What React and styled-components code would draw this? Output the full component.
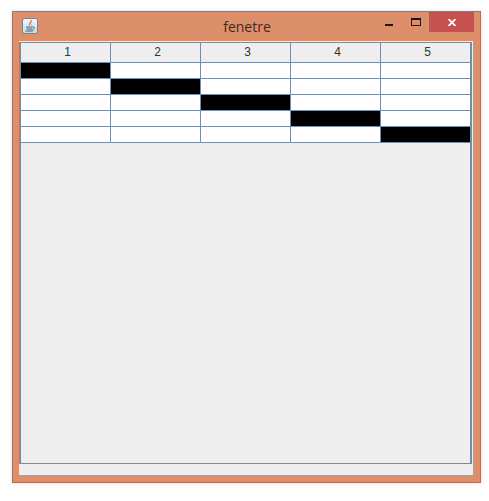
import React from "react";
import styled, { createGlobalStyle } from "styled-components";

const Global = createGlobalStyle`
  html, body { margin: 0; padding: 0; background: #ffffff; }
  body { font-family: "Liberation Sans", Arial, sans-serif; }
`;

const Page = styled.div`
  width: 489px;
  height: 501px;
  padding: 11px 0 0 12px;
  box-sizing: border-box;
  overflow: hidden;
`;
const Frame = styled.div`
  width: 469px;
  height: 472px;
  box-sizing: border-box;
  background: #dd8f6b;
  border: 1px solid #a9745a;
  box-shadow: 0 0 4px rgba(0, 0, 0, 0.14);
  display: flex;
  flex-direction: column;
  padding: 0 7px 7px 6px;
`;
const TitleBar = styled.div`
  height: 29px;
  flex: none;
  display: flex;
  align-items: center;
  position: relative;
`;
const AppIcon = styled.svg`
  width: 16px;
  height: 16px;
  margin: -1px 0 0 3px;
  flex: none;
`;
const Title = styled.div`
  position: absolute;
  left: 0;
  right: 0;
  top: 6px;
  text-align: center;
  font-family: "Open Sans", "Liberation Sans", sans-serif;
  font-size: 14px;
  line-height: 18px;
  color: #3b2a20;
  padding-left: 2px;
`;
const Controls = styled.div`
  margin-left: auto;
  margin-right: -1px;
  align-self: flex-start;
  display: flex;
`;
const Control = styled.div`
  width: ${p => p.$w}px;
  height: 20px;
  display: flex;
  align-items: center;
  justify-content: center;
  background: ${p => p.$bg || "transparent"};
`;
const MinBar = styled.span`
  width: 8px;
  height: 2px;
  margin-top: 6px;
  background: #1a1a1a;
`;
const Content = styled.div`
  flex: 1;
  background: #eeeeee;
  padding: 1px 1px 11px 0;
  display: flex;
  min-height: 0;
`;
const Pane = styled.div`
  flex: 1;
  box-sizing: border-box;
  border-style: solid;
  border-color: #7b8c9e;
  border-width: 1px 2px;
  background: #eeeeee;
`;
const Grid = styled.div`
  display: grid;
  grid-template-columns: repeat(5, 89px);
  grid-template-rows: 19px repeat(5, 15px);
  gap: 1px;
  background: #7b8c9e;
  border-bottom: 1px solid #7b8c9e;
  width: 449px;
`;
const Head = styled.div`
  background: #eeeeee;
  font-size: 12px;
  line-height: 19px;
  text-align: center;
  color: #333333;
  padding-left: 4px;
`;
const Cell = styled.div`
  background: ${p => (p.$on ? "#000000" : "#ffffff")};
`;

const cols = [1, 2, 3, 4, 5];

export default function App() {
  return (
    <>
      <Global />
      <Page>
        <Frame>
          <TitleBar>
            <AppIcon viewBox="0 0 16 16">
              <defs>
                <linearGradient id="iconBg" x1="0" y1="0" x2="0" y2="1">
                  <stop offset="0" stopColor="#f4f7fa" />
                  <stop offset="1" stopColor="#c9d6e3" />
                </linearGradient>
              </defs>
              <rect x="0.5" y="0.5" width="15" height="15" rx="2" fill="url(#iconBg)" stroke="#6f8296" />
              <path d="M9 2c1 2-3 3-1.500 5.500C7 5.500 10.500 5 9 2z" fill="#e2641c" stroke="#e2641c" strokeWidth="0.6" />
              <path d="M10 5c0 1.500-1.500 2-1 3 .2-1 2-1.500 1-3z" fill="#e88a3a" />
              <path d="M4 9h6.500M4.500 11h5.500M3.500 13h7.500" stroke="#3f6289" strokeWidth="1" fill="none" />
              <path d="M10.500 9c2.500-.5 2.500 2 0 2.500" stroke="#3f6289" fill="none" />
            </AppIcon>
            <Title>fenetre</Title>
            <Controls>
              <Control $w={28}>
                <MinBar />
              </Control>
              <Control $w={26}>
                <svg width="10" height="8" viewBox="0 0 10 8">
                  <rect x="0.5" y="0.5" width="9" height="7" fill="none" stroke="#1a1a1a" />
                  <rect x="0" y="0" width="10" height="2" fill="#1a1a1a" />
                </svg>
              </Control>
              <Control $w={45} $bg="#c75050">
                <svg width="8" height="7" viewBox="0 0 8 7">
                  <path d="M0.5 0 7.5 7M7.5 0 0.5 7" stroke="#ffffff" strokeWidth="1.8" />
                </svg>
              </Control>
            </Controls>
          </TitleBar>
          <Content>
            <Pane>
              <Grid>
                {cols.map(c => (
                  <Head key={c}>{c}</Head>
                ))}
                {cols.map(r =>
                  cols.map(c => <Cell key={`${r}-${c}`} $on={r === c} />)
                )}
              </Grid>
            </Pane>
          </Content>
        </Frame>
      </Page>
    </>
  );
}
